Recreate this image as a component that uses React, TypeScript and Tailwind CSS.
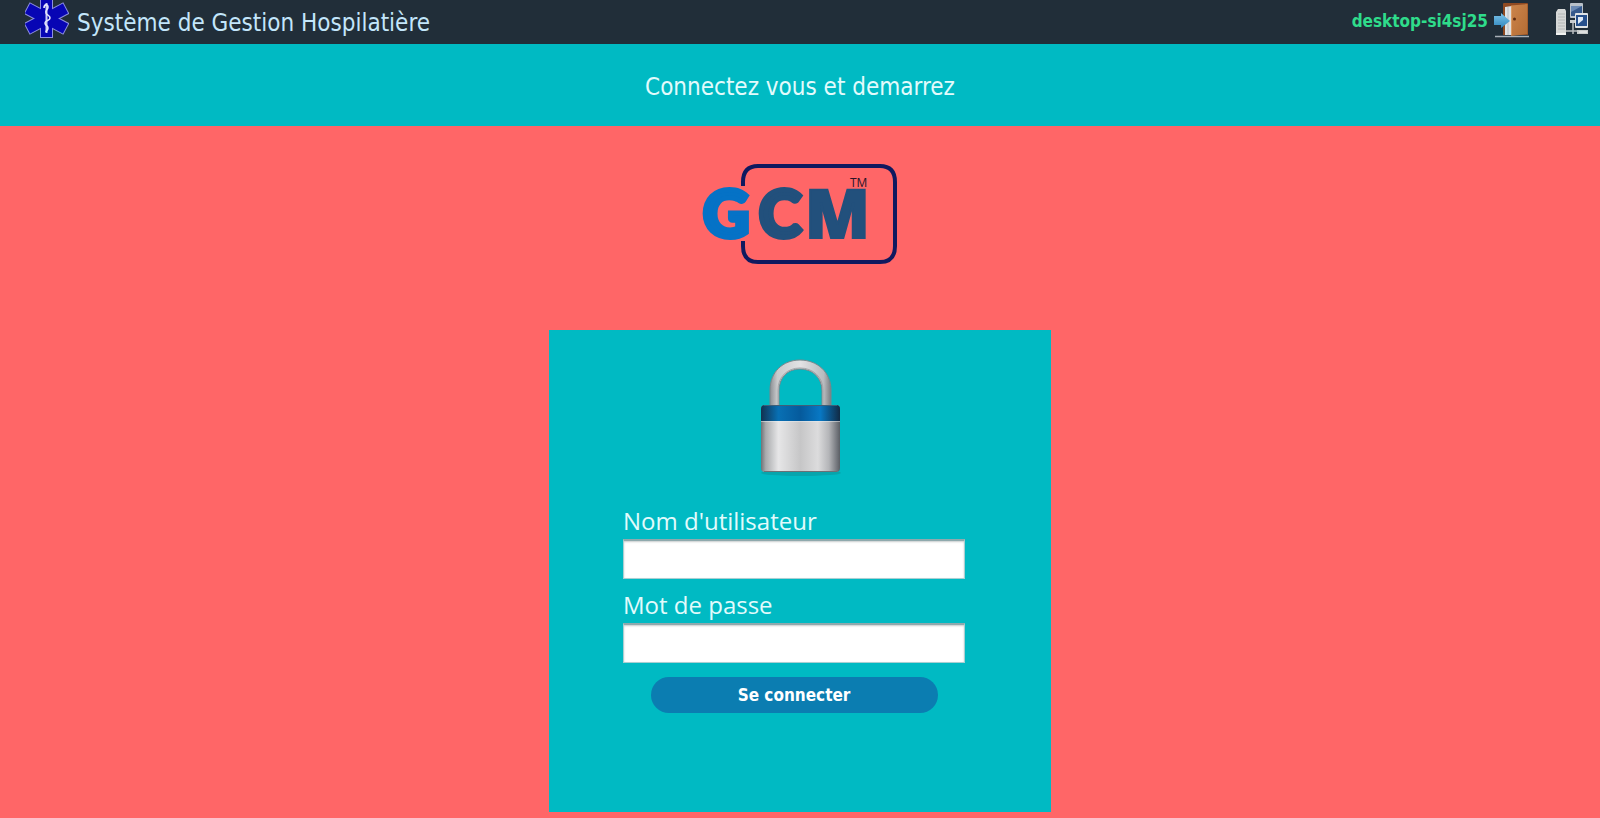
function StarOfLife() {
  return (
    <svg className="self-start" width="44" height="38" viewBox="0 0 44 38" aria-hidden="true">
      <g fill="#8d8fe0">
        <rect x="15" y="-1" width="13" height="39" />
        <rect x="15" y="-4" width="13" height="45" transform="rotate(62 21.5 18.5)" />
        <rect x="15" y="-4" width="13" height="45" transform="rotate(-62 21.5 18.5)" />
      </g>
      <g fill="#0705b4">
        <rect x="16" y="0" width="11" height="37" />
        <rect x="16" y="-3" width="11" height="43" transform="rotate(62 21.5 18.5)" />
        <rect x="16" y="-3" width="11" height="43" transform="rotate(-62 21.5 18.5)" />
      </g>
      <path d="M21.5 3v30" stroke="#c9caf5" strokeWidth="2" />
      <path
        d="M19 8c0-4 4-4 4-1s-3 3-2 6 4 2 4 5-5 2-5 5 3 2 3 5-2 2-2 4"
        fill="none"
        stroke="#e4e5fb"
        strokeWidth="1.6"
      />
    </svg>
  );
}

function DoorIcon() {
  return (
    <svg width="36" height="36" viewBox="0 0 36 36" aria-hidden="true">
      <defs>
        <linearGradient id="door" x1="0" y1="0" x2="1" y2="1">
          <stop offset="0" stopColor="#cc854b" />
          <stop offset="1" stopColor="#b36c34" />
        </linearGradient>
        <linearGradient id="arrow" x1="0" y1="0" x2="0" y2="1">
          <stop offset="0" stopColor="#7cc4ea" />
          <stop offset="1" stopColor="#2f86bd" />
        </linearGradient>
      </defs>
      <path d="M1 34.5h34" stroke="#a9b0b8" strokeWidth="1.6" />
      <path d="M9 2q0-1 1-1h23q1 0 1 1v31H9z" fill="#8f4a22" />
      <path d="M11 5l7-1v29h-7z" fill="#dfe2e4" />
      <path d="M14 5v28" stroke="#b9bdc2" strokeWidth="1" />
      <path d="M17 3.5L33.5 2v30L17 34z" fill="url(#door)" />
      <path d="M17.5 4v29" stroke="#d99a62" strokeWidth="1" />
      <circle cx="20.5" cy="17" r="1.5" fill="#5e2b10" />
      <path d="M0 14h7v-3l9 8-9 7v-3H0z" fill="url(#arrow)" />
    </svg>
  );
}

function NetworkIcon() {
  return (
    <svg width="36" height="36" viewBox="0 0 36 36" aria-hidden="true">
      <path d="M12 29h21M19 20v12" stroke="#b9bdc0" strokeWidth="1.5" />
      <path d="M16 18h9v3h-9z" fill="#c9ccce" />
      <rect x="16" y="1" width="13" height="15" rx="1" fill="#b9c1c9" />
      <rect x="17" y="4" width="11" height="10" fill="#36598c" />
      <path d="M17 4h11l-11 6z" fill="#6b8ab4" />
      <path d="M2 10l2-3h7l1 2v23l-2 1H2z" fill="#d5d7d6" />
      <path d="M4 12h7M4 15h7M4 18h7M4 21h7M4 24h7M4 27h7" stroke="#b3b6b6" strokeWidth="1" />
      <path d="M2 31h10v2H2z" fill="#f1f2f1" />
      <rect x="21" y="11" width="13" height="15" rx="1" fill="#e0e3e5" />
      <rect x="22" y="13" width="11" height="11" fill="#27508c" />
      <path d="M24 15h5v3l-5 4z" fill="#dfe9f5" />
      <path d="M23 28h11v4H23z" fill="#c7cacb" />
      <path d="M25 30h8" stroke="#f4f5f5" strokeWidth="1" />
    </svg>
  );
}

function GcmLogo() {
  return (
    <svg width="196" height="102" viewBox="0 0 196 102" role="img" aria-label="GCM">
      <path
        d="M41 22V18Q41 2 56 2H178Q193 2 193 18V82Q193 98 178 98H56Q41 98 41 82V77"
        fill="none"
        stroke="#10195f"
        strokeWidth="4"
      />
      <g className="font-['Lato'] font-black" fontSize="64" strokeWidth="5">
        <text x="1" y="73" fill="#0572c6" stroke="#0572c6">G</text>
        <text x="57" y="73" fill="#22507c" stroke="#22507c">C</text>
      </g>
      <text
        className="font-['Open_Sans'] font-extrabold"
        x="103"
        y="74"
        fontSize="67"
        fill="#22507c"
        stroke="#22507c"
        strokeWidth="2"
      >
        M
        <tspan className="font-normal" x="148" y="23" fontSize="12" fill="#2b1528" stroke="none">TM</tspan>
      </text>
    </svg>
  );
}

function Padlock() {
  return (
    <svg width="84" height="118" viewBox="0 0 84 118" aria-hidden="true">
      <defs>
        <linearGradient id="steel">
          <stop offset="0" stopColor="#6f7276" />
          <stop offset="0.06" stopColor="#a9abad" />
          <stop offset="0.22" stopColor="#e6e6e7" />
          <stop offset="0.5" stopColor="#c6c6c7" />
          <stop offset="0.72" stopColor="#dcdcdd" />
          <stop offset="0.86" stopColor="#b4b5b8" />
          <stop offset="0.96" stopColor="#74777d" />
          <stop offset="1" stopColor="#5b5e64" />
        </linearGradient>
        <linearGradient id="band">
          <stop offset="0" stopColor="#123250" />
          <stop offset="0.22" stopColor="#0870b4" />
          <stop offset="0.5" stopColor="#055a9c" />
          <stop offset="0.75" stopColor="#0878c4" />
          <stop offset="1" stopColor="#112a44" />
        </linearGradient>
        <linearGradient id="shackle">
          <stop offset="0" stopColor="#8c8f93" />
          <stop offset="0.12" stopColor="#c9cacc" />
          <stop offset="0.5" stopColor="#e2e2e4" />
          <stop offset="0.88" stopColor="#b9bbbe" />
          <stop offset="1" stopColor="#7a7d81" />
        </linearGradient>
      </defs>
      <ellipse cx="42" cy="114" rx="40" ry="3" fill="#0b8f98" opacity="0.5" />
      <path
        d="M11 49V31C11 13 24 1 41 1s31 12 31 30v18h-9V32C63 19 54 10 41 10S20 19 20 32v17z"
        fill="url(#shackle)"
        stroke="#7d868b"
        strokeWidth="1"
      />
      <path d="M19 49V31C19 18 28 9 41 9s23 9 23 22v18" fill="none" stroke="#a3a6a9" strokeWidth="1" />
      <rect x="2" y="46" width="79" height="67" rx="4" fill="url(#steel)" />
      <path d="M2 62V50q0-4 4-4h71q4 0 4 4v12z" fill="url(#band)" />
      <path d="M5 46.5h73" stroke="#3f5f78" strokeWidth="1" />
      <path d="M2 62.5h79" stroke="#e9eef1" strokeWidth="1" opacity="0.5" />
      <path d="M5 112.5h73" stroke="#6c7075" strokeWidth="1" />
    </svg>
  );
}

const FIELDS = [
  { id: "username", label: "Nom d'utilisateur", type: "text" },
  { id: "password", label: "Mot de passe", type: "password" },
];

export default function App() {
  return (
    <div className="min-h-screen flex flex-col bg-[#ff6667] font-['DejaVu_Sans_Condensed','Noto_Sans',sans-serif]">
      <header className="h-11 flex items-center justify-between bg-[#212e39] pl-[25px] pr-[10px]">
        <div className="h-full flex items-center gap-2">
          <StarOfLife />
          <h1 className="pt-0.5 text-2xl text-[#c3e6fb]">Système de Gestion Hospilatière</h1>
        </div>
        <div className="flex items-center">
          <span className="mr-1.5 text-[17px] font-bold text-[#2fdc8b]">desktop-si4sj25</span>
          <button type="button" aria-label="Quitter" className="mb-1">
            <DoorIcon />
          </button>
          <button type="button" aria-label="Réseau" className="ml-6 mb-1">
            <NetworkIcon />
          </button>
        </div>
      </header>

      {/* Banner */}
      <div className="h-[82px] flex items-center justify-center bg-[#00bac3]">
        <h2 className="pt-1 text-2xl text-[#e2fbfc]">Connectez vous et demarrez</h2>
      </div>

      <main className="flex-1 flex flex-col items-center pt-[38px] pb-1.5">
        <GcmLogo />

        <form
          className="mt-16 w-full max-w-[502px] flex-1 flex flex-col bg-[#00bac3] pt-[29px] pb-24 pl-[74px] pr-[86px]"
          onSubmit={(e) => e.preventDefault()}
        >
          <div className="flex justify-center pl-3.5 mb-[26px]">
            <Padlock />
          </div>

          {FIELDS.map((field) => (
            <div key={field.id} className="mb-2 flex flex-col">
              <label
                htmlFor={field.id}
                className="h-9 leading-9 font-['Open_Sans',sans-serif] text-2xl text-[#e2fbfc]"
              >
                {field.label}
              </label>
              <input
                id={field.id}
                type={field.type}
                className="h-10 w-full border border-t-2 border-[#a9cfd2] border-t-[#8fa9ad] bg-white px-2 text-lg shadow-[inset_0_1px_2px_#c8cccd]"
              />
            </div>
          ))}

          <button
            type="submit"
            className="mt-1.5 mx-auto h-9 w-[287px] rounded-full bg-[#0b7db1] pt-0.5 text-[17px] font-bold text-white"
          >
            Se connecter
          </button>
        </form>
      </main>
    </div>
  );
}
